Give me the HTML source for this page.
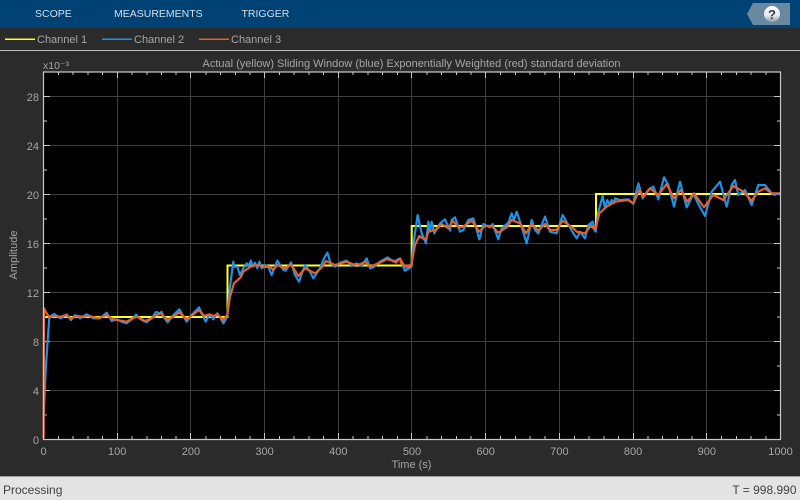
<!DOCTYPE html>
<html><head><meta charset="utf-8"><style>
html,body{margin:0;padding:0;width:800px;height:500px;overflow:hidden;background:#2b2b2b}
svg{position:absolute;left:0;top:0}
text{font-family:"Liberation Sans",sans-serif}
</style></head><body>
<svg width="800" height="500" viewBox="0 0 800 500" xmlns="http://www.w3.org/2000/svg">
<defs><linearGradient id="hb" x1="0" y1="0" x2="0" y2="1"><stop offset="0" stop-color="#ffffff"/><stop offset=".6" stop-color="#e4e8ec"/><stop offset="1" stop-color="#8f9aa6"/></linearGradient></defs>
<rect width="800" height="500" fill="#2b2b2b"/>
<rect width="800" height="28" fill="#004274"/>
<g font-size="10.500" fill="#d3dfe9">
<text x="35" y="17">SCOPE</text><text x="114" y="17">MEASUREMENTS</text><text x="241.500" y="17">TRIGGER</text></g>
<polygon points="753,3 790,3 790,25 753,25 747,14" fill="#68899f"/>
<circle cx="772" cy="14" r="8" fill="url(#hb)"/>
<text x="772" y="19" font-size="13" font-weight="bold" fill="#2c4258" text-anchor="middle">?</text>
<rect y="50" width="800" height="1" fill="#bdbdbd"/>
<rect x="5" y="38.500" width="30" height="1.500" fill="#ffff20"/>
<rect x="102" y="38.500" width="30" height="1.500" fill="#1a94ea"/>
<rect x="199" y="38.500" width="30" height="1.500" fill="#e8602c"/>
<g font-size="11" fill="#a6a6a6"><text x="37" y="43">Channel 1</text><text x="134" y="43">Channel 2</text><text x="231" y="43">Channel 3</text>
<text x="43" y="69" font-size="10.500">x10⁻³</text>
<text x="411.500" y="67" text-anchor="middle">Actual (yellow) Sliding Window (blue) Exponentially Weighted (red) standard deviation</text>
<text x="411.500" y="468" text-anchor="middle">Time (s)</text>
<text transform="translate(17,255) rotate(-90)" text-anchor="middle">Amplitude</text>
<g text-anchor="middle"><text x="43.500" y="455">0</text><text x="117.200" y="455">100</text><text x="190.900" y="455">200</text><text x="264.600" y="455">300</text><text x="338.300" y="455">400</text><text x="412" y="455">500</text><text x="485.700" y="455">600</text><text x="559.400" y="455">700</text><text x="633.100" y="455">800</text><text x="706.800" y="455">900</text><text x="780.500" y="455">1000</text></g>
<g text-anchor="end"><text x="39" y="444">0</text><text x="39" y="395">4</text><text x="39" y="346">8</text><text x="39" y="297">12</text><text x="39" y="248">16</text><text x="39" y="199">20</text><text x="39" y="150">24</text><text x="39" y="101">28</text></g></g>
<rect x="43.500" y="72" width="737" height="367.500" fill="#000"/>
<path d="M117.500 72V439M190.500 72V439M264.500 72V439M338.500 72V439M411.500 72V439M485.500 72V439M559.500 72V439M633.500 72V439M706.500 72V439M44 96.500H780M44 145.500H780M44 194.500H780M44 243.500H780M44 292.500H780M44 341.500H780M44 390.500H780" stroke="#3f3f3f" stroke-width="1" fill="none"/>
<path d="M58.500 72v3M73 72v3M88 72v3M102.500 72v3M132 72v3M147 72v3M161.500 72v3M176 72v3M206 72v3M220.500 72v3M235.500 72v3M250 72v3M279.500 72v3M294 72v3M309 72v3M323.500 72v3M353 72v3M368 72v3M382.500 72v3M397.500 72v3M427 72v3M441.500 72v3M456.500 72v3M471 72v3M500.500 72v3M515.500 72v3M530 72v3M545 72v3M574.500 72v3M589 72v3M604 72v3M618.500 72v3M648 72v3M662.500 72v3M677.500 72v3M692 72v3M721.500 72v3M736.500 72v3M751 72v3M766 72v3M117.500 72v6M190.500 72v6M264.500 72v6M338.500 72v6M411.500 72v6M485.500 72v6M559.500 72v6M633.500 72v6M706.500 72v6
M58.500 439v-3M73 439v-3M88 439v-3M102.500 439v-3M132 439v-3M147 439v-3M161.500 439v-3M176 439v-3M206 439v-3M220.500 439v-3M235.500 439v-3M250 439v-3M279.500 439v-3M294 439v-3M309 439v-3M323.500 439v-3M353 439v-3M368 439v-3M382.500 439v-3M397.500 439v-3M427 439v-3M441.500 439v-3M456.500 439v-3M471 439v-3M500.500 439v-3M515.500 439v-3M530 439v-3M545 439v-3M574.500 439v-3M589 439v-3M604 439v-3M618.500 439v-3M648 439v-3M662.500 439v-3M677.500 439v-3M692 439v-3M721.500 439v-3M736.500 439v-3M751 439v-3M766 439v-3M117.500 439v-6M190.500 439v-6M264.500 439v-6M338.500 439v-6M411.500 439v-6M485.500 439v-6M559.500 439v-6M633.500 439v-6M706.500 439v-6
M44 415h3M44 366h3M44 317h3M44 268h3M44 219h3M44 170h3M44 121h3M44 390.500h6M44 341.500h6M44 292.500h6M44 243.500h6M44 194.500h6M44 145.500h6M44 96.500h6
M780 415h-3M780 366h-3M780 317h-3M780 268h-3M780 219h-3M780 170h-3M780 121h-3M780 390.500h-6M780 341.500h-6M780 292.500h-6M780 243.500h-6M780 194.500h-6M780 145.500h-6M780 96.500h-6" stroke="#c8c8c8" stroke-width="1" fill="none"/>
<path d="M43.500 317H227.500V265.500H411.700V226H596V194H780.500" fill="none" stroke="#ffff20" stroke-width="2"/>
<g fill="none" stroke="#1a94ea" stroke-width="6.500" stroke-linejoin="round">
<path transform="translate(0,280) scale(.33333)" d="M131 405L138 255L148 110L163 102L175 112L183 115L200 103L213 120L225 105L240 115L260 103L280 115L300 115L320 98L335 123L350 118L365 125L380 130L395 118L408 104L425 120L440 127L455 115L468 96L480 100L485 95L490 110L503 127L520 105L538 88L560 125L575 105L597 82L617 125L628 103L640 118L652 100L672 128L682 108"/>
<path transform="translate(220,220) scale(.33333)" d="M0 292L10 310L22 285L30 200L40 125L42 140L52 140L60 165L70 145L80 130L85 138L93 122L98 140L105 128L112 145L118 125L125 145L135 135L145 140L155 165L172 122L190 150L197 152L213 127L225 165L237 185L255 135L270 155L280 175L300 145L312 115L322 98L332 130L345 140L360 128L380 122L395 138L410 130L425 138L440 115L450 145L460 142L480 125L503 112L520 125L540 115L555 152L575 140"/>
<path transform="translate(400,200) scale(.33333)" d="M0 175L15 212L33 200L42 120L53 45L65 100L78 130L85 65L90 95L95 65L103 100L120 70L135 58L150 92L155 60L165 52L180 95L190 90L205 60L220 55L238 118L250 72L270 82L278 72L295 118L305 85L325 68L335 40L342 60L350 35L360 65L380 130L395 60L405 90L415 100L435 50L450 95L470 100L488 45L505 75L520 100L530 115L540 95L555 115L565 75L578 65L588 95"/>
<path transform="translate(590,170) scale(.33333)" d="M0 160L17 185L25 125L38 78L45 115L52 90L60 105L65 90L72 100L75 85L90 90L115 88L130 102L145 40L158 85L175 60L190 50L205 88L222 22L235 45L252 110L270 35L290 112L310 72L332 115L345 138L365 65L390 35L410 110L425 45L435 30L445 75L465 60L485 105L505 45L525 45L545 70L553 75L565 70L570 75"/>
</g>
<g fill="none" stroke="#e8602c" stroke-width="6.500" stroke-linejoin="round">
<path transform="translate(0,280) scale(.33333)" d="M131 475L132 85L140 100L148 112L165 108L183 110L197 105L212 115L230 108L250 110L265 107L295 115L320 105L340 118L380 125L410 110L435 123L455 115L470 105L483 100L503 120L520 110L538 97L560 118L597 90L612 108L628 103L640 108L652 103L668 118L682 108"/>
<path transform="translate(220,220) scale(.33333)" d="M0 292L10 300L22 285L30 230L42 190L62 172L70 155L95 138L115 135L130 142L150 140L160 150L172 135L195 145L213 133L235 168L255 145L285 160L305 143L318 123L345 135L380 125L400 133L420 133L435 125L450 140L480 128L500 118L520 122L528 128L540 116L553 138L575 135"/>
<path transform="translate(400,200) scale(.33333)" d="M0 185L15 200L33 200L45 135L58 108L68 115L78 118L85 95L110 88L125 72L145 85L158 62L175 82L190 80L215 62L238 95L255 78L275 78L295 98L320 82L335 60L360 70L378 100L395 72L415 92L435 72L450 90L470 90L488 62L520 85L530 95L555 100L570 80L588 78"/>
<path transform="translate(590,170) scale(.33333)" d="M0 170L17 175L28 130L50 110L75 95L115 90L130 100L148 60L160 80L180 55L205 75L230 42L252 85L272 60L292 95L312 70L342 112L370 75L400 90L430 48L460 65L485 92L505 65L525 55L545 70L570 70"/>
</g>
<path d="M43.500 72H780.500V439.500H43.500Z" fill="none" stroke="#c8c8c8" stroke-width="1.200"/>
<rect y="477" width="800" height="23" fill="#e4e4e4"/>
<rect y="476" width="800" height="1" fill="#a0a0a0"/>
<g font-size="12" fill="#404040"><text x="3" y="494">Processing</text><text x="796.500" y="494" text-anchor="end">T = 998.990</text></g>
</svg>
</body></html>
